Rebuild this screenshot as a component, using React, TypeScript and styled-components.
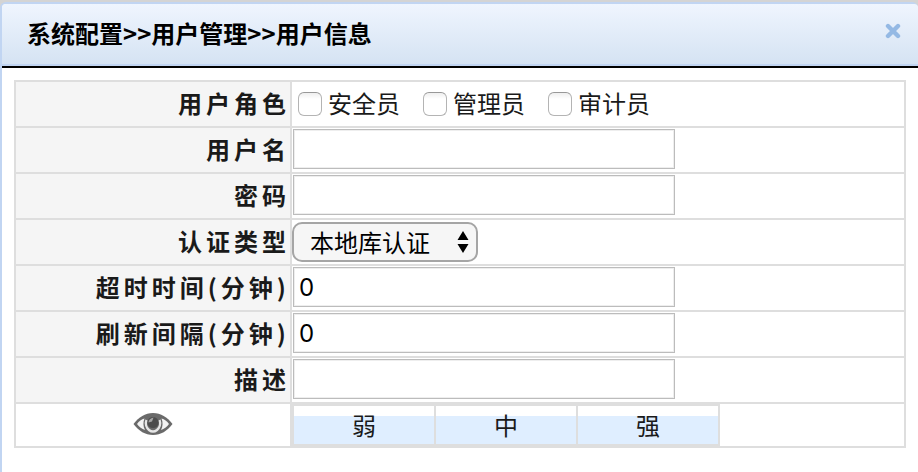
import React, { useState } from "react";
import styled, { createGlobalStyle } from "styled-components";

const GlobalStyle = createGlobalStyle`
  *, *::before, *::after { box-sizing: border-box; }
  body {
    margin: 0;
    background: #d4d4d4;
    color: #1a1a1a;
    font: 24px/34px "Noto Sans CJK SC", sans-serif;
  }
  input, select, button { font: inherit; margin: 0; }
`;

const Dialog = styled.main`
  min-height: calc(100vh - 2px);
  margin-top: 2px;
  background: #fff;
  border: solid #c1d5f2;
  border-width: 2px 0 0 2px;
  border-radius: 6px 6px 0 0;
`;

const TitleBar = styled.header`
  display: flex;
  justify-content: space-between;
  align-items: flex-start;
  height: 62px;
  padding: 12px 17px 0 25px;
  background: linear-gradient(#eff5fe, #d5e3f3);
  border-bottom: 2px solid #c1d5f2;
  border-radius: 4px 4px 0 0;
`;

const Title = styled.h1`
  margin: 0;
  font-size: 24px;
  line-height: 34px;
  font-weight: 700;
  color: #000;
`;

const CloseButton = styled.button`
  display: flex;
  margin-top: 7px;
  padding: 0;
  border: 0;
  background: none;
  cursor: pointer;
`;

const Body = styled.form`
  padding: 12px;
  border-top: 2px solid #000;
`;

const FormTable = styled.table`
  width: 100%;
  border-collapse: collapse;
  table-layout: fixed;
`;

const Row = styled.tr<{ $short?: boolean }>`
  height: ${(p) => (p.$short ? 44 : 46)}px;
`;

const LabelCell = styled.th`
  width: 31%;
  padding: 0 0 2px;
  border: 2px solid #dedede;
  background: #f5f5f5;
  text-align: right;
  font-weight: 700;
  letter-spacing: 4px;
`;

const Cell = styled.td<{ $center?: boolean }>`
  padding: 0;
  border: 2px solid #dedede;
  text-align: ${(p) => (p.$center ? "center" : "left")};
`;

const TextInput = styled.input`
  display: block;
  width: calc(100% - 2px);
  max-width: 382px;
  height: 40px;
  margin: 0 1px 2px;
  padding: 0 5px;
  border: 1px solid #bcbcbc;
  border-radius: 0;
  box-shadow: inset 0 0 0 1px #eee;
  background: #fff;
  color: #000;
  font-family: Inter, "Noto Sans CJK SC", sans-serif;
`;

const CheckGroup = styled.div`
  display: flex;
  gap: 23px;
  padding-left: 6px;
`;

const CheckLabel = styled.label`
  display: flex;
  align-items: center;
  gap: 6px;
  white-space: nowrap;
  line-height: 32px;
  padding-bottom: 2px;
`;

const CheckBox = styled.input`
  appearance: none;
  flex: none;
  width: 24px;
  height: 24px;
  margin-top: 2px;
  border: 1px solid #b4b4b4;
  border-top-color: #989898;
  border-radius: 6px;
  background: linear-gradient(#efefef, #fff 6px);
  &:checked { background: #4a90e2; }
`;

const SelectWrap = styled.div`
  position: relative;
  max-width: 186px;
  svg {
    position: absolute;
    top: 9px;
    right: 9px;
    pointer-events: none;
  }
`;

const Select = styled.select`
  appearance: none;
  display: block;
  width: 100%;
  height: 40px;
  padding: 0 36px 0 16px;
  border: 2px solid #a5a5a5;
  border-radius: 10px;
  background: #f6f6f6;
  color: #000;
  line-height: 36px;
`;

const EyeButton = styled.button`
  display: flex;
  margin: 0 auto 2px;
  padding: 0;
  border: 0;
  background: none;
  cursor: pointer;
`;

const StrengthTable = styled.table`
  width: 100%;
  max-width: 428px;
  border-collapse: separate;
  border-spacing: 2px;
  table-layout: fixed;
  background: #dedede;
`;

const StrengthCell = styled.td`
  height: 38px;
  padding: 0;
  text-align: center;
  line-height: 38px;
  background: linear-gradient(#fff 10px, #dfeeff 10px);
`;

function CloseIcon() {
  return (
    <svg width="16" height="16" viewBox="0 0 16 16" aria-hidden="true">
      <path d="M3 3 L13 13 M13 3 L3 13" stroke="#94b9e4" strokeWidth="4.4" strokeLinecap="round" />
    </svg>
  );
}

function Arrows() {
  return (
    <svg width="12" height="22" viewBox="0 0 12 22" aria-hidden="true">
      <path d="M6 0 L11.5 9 H0.5 Z M0.5 13 H11.5 L6 22 Z" fill="#000" />
    </svg>
  );
}

function EyeIcon() {
  return (
    <svg width="40" height="24" viewBox="0 0 40 24" aria-hidden="true">
      <path d="M0.500 12 C6 5 12 1 20 1 S34 5 39.500 12 C34 19 28 23 20 23 S6 19 0.500 12Z" fill="#6a6a6a" />
      <path d="M4 12 C6 9 8.500 7.500 11.500 6.500 C10 10 10 14.500 12 18 C9 17 6 15 4 12Z" fill="#f3f3f3" />
      <path d="M36 12 C34 9 31.500 7.500 28.500 6.500 C30 10 30 14.500 28 18 C31 17 34 15 36 12Z" fill="#f3f3f3" />
      <path d="M13.500 8 C12 12 13.500 16 16 18 C18.500 20 21.500 20 24 18 C26.500 16 28 12 26.500 8" fill="none" stroke="#e6e6e6" strokeWidth="2.400" />
      <circle cx="20" cy="10.500" r="5.600" fill="#4c4c4c" />
      <path d="M20.500 5.500 L19 9.500 L15.500 10.500 C15.500 8 17.500 6 20.500 5.500Z" fill="#a5a5a5" />
    </svg>
  );
}

const roles = ["安全员", "管理员", "审计员"];

function TextRow({ id, label, type = "text", value = "" }: { id: string; label: string; type?: string; value?: string }) {
  return (
    <Row>
      <LabelCell scope="row"><label htmlFor={id}>{label}</label></LabelCell>
      <Cell><TextInput id={id} type={type} defaultValue={value} /></Cell>
    </Row>
  );
}

export default function App() {
  const [visible, setVisible] = useState(false);
  return (
    <>
      <GlobalStyle />
      <Dialog>
        <TitleBar>
          <Title>系统配置&gt;&gt;用户管理&gt;&gt;用户信息</Title>
          <CloseButton type="button" aria-label="关闭"><CloseIcon /></CloseButton>
        </TitleBar>
        <Body onSubmit={(e) => e.preventDefault()}>
          <FormTable>
            <tbody>
              <Row>
                <LabelCell scope="row" id="roles">用户角色</LabelCell>
                <Cell>
                  <CheckGroup role="group" aria-labelledby="roles">
                    {roles.map((role) => (
                      <CheckLabel key={role}><CheckBox type="checkbox" />{role}</CheckLabel>
                    ))}
                  </CheckGroup>
                </Cell>
              </Row>
              <TextRow id="username" label="用户名" />
              <TextRow id="password" label="密码" type={visible ? "text" : "password"} />
              <Row>
                <LabelCell scope="row"><label htmlFor="auth">认证类型</label></LabelCell>
                <Cell>
                  <SelectWrap>
                    <Select id="auth"><option>本地库认证</option></Select>
                    <Arrows />
                  </SelectWrap>
                </Cell>
              </Row>
              <TextRow id="timeout" label="超时时间(分钟)" value="0" />
              <TextRow id="refresh" label="刷新间隔(分钟)" value="0" />
              <TextRow id="description" label="描述" />
              <Row $short>
                <Cell $center>
                  <EyeButton type="button" aria-label="显示密码" onClick={() => setVisible(!visible)}><EyeIcon /></EyeButton>
                </Cell>
                <Cell>
                  <StrengthTable>
                    <tbody>
                      <tr>
                        <StrengthCell>弱</StrengthCell>
                        <StrengthCell>中</StrengthCell>
                        <StrengthCell>强</StrengthCell>
                      </tr>
                    </tbody>
                  </StrengthTable>
                </Cell>
              </Row>
            </tbody>
          </FormTable>
        </Body>
      </Dialog>
    </>
  );
}
